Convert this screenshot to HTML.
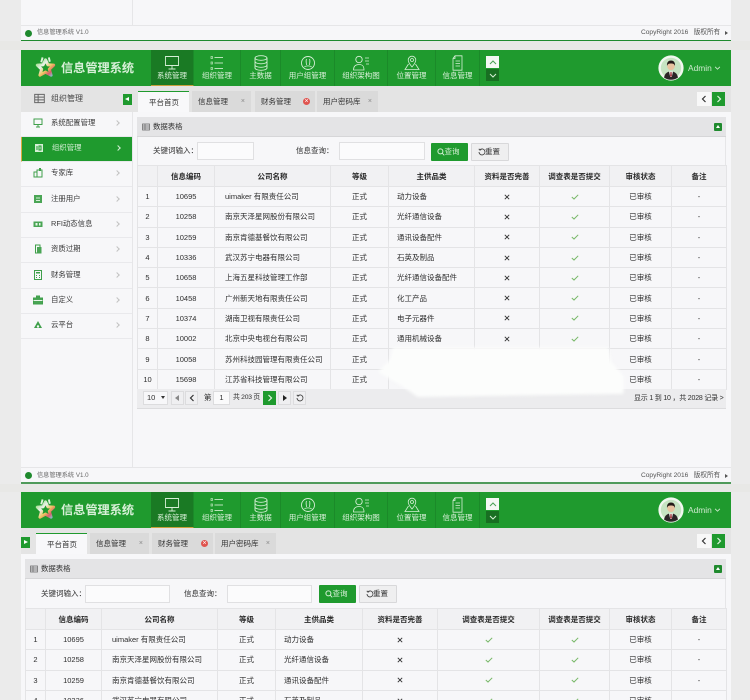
<!DOCTYPE html>
<html lang="zh-CN">
<head>
<meta charset="utf-8">
<title>信息管理系统</title>
<style>
*{box-sizing:border-box;margin:0;padding:0}
html,body{width:750px;height:700px;overflow:hidden}
body{position:relative;background:#ebebeb;font-family:"Liberation Sans","Noto Sans CJK SC",sans-serif;font-size:7.5px;color:#2e2e2e}
#page{position:absolute;left:0;top:0;width:750px;height:700px;filter:blur(.25px);overflow:hidden}
.a{position:absolute}
.c{position:absolute;left:21px;width:710px;background:#f7f7f9}
.t{position:absolute;white-space:nowrap;line-height:10px}
/* header */
.hd{position:absolute;left:21px;width:710px;height:36px;background:#1f9a2e}
.logo{position:absolute;left:13px;top:6px}
.brand{position:absolute;left:40px;top:10px;font-size:12.2px;line-height:16px;font-weight:bold;color:#d8f0d8;white-space:nowrap}
.nav{position:absolute;top:0;height:36px;border-right:1px solid #1b8a29;color:#d9f0d9;text-align:center}
.nav.on{background:#1a7a24;border-bottom:1px solid #c9a03c}
.nav svg{position:absolute;left:50%;top:5px;margin-left:-9px}
.nav span{position:absolute;left:0;right:0;top:21px;line-height:10px;font-size:7.5px;white-space:nowrap}
.up{position:absolute;left:465px;top:6px;width:13px;height:12px;background:#f4f8f4}
.dn{position:absolute;left:465px;top:19px;width:13px;height:12px;background:#186f22}
.adm{position:absolute;left:667px;top:12px;font-size:8.4px;line-height:12px;color:#cfeacf}
/* tabs */
.bar{position:absolute;height:26px;background:#e4e4e4}
.tab{position:absolute;height:21px;background:#dadada;line-height:21px;font-size:7.5px;padding-left:6px;white-space:nowrap;color:#333}
.tab.on{background:#f8f8fa;border-top:1px solid #1f9a2e;padding-left:11px;height:21px}
.tab i{position:absolute;right:6px;top:0;font-style:normal;color:#888;font-size:7px}
.tab b{position:absolute;right:5px;top:7px;width:7px;height:7px;border-radius:50%;background:#e0544f}
.tab b:after{content:"×";position:absolute;left:0;top:0;width:7px;height:7px;line-height:7px;text-align:center;font-size:7px;font-weight:normal;color:#fff}
.ar{position:absolute;width:14px;height:14px;background:#f8f8f8}
.ar.g{background:#1f9a2e;width:13px}
.tg{position:absolute;width:9px;height:11px;background:#1f9a2e}
/* sidebar */
.sb{position:absolute;left:21px;width:111px;height:25.3px;border-bottom:1px solid #e9e9ec;line-height:22px;padding-left:30px;color:#3a3a3a;font-size:7.4px}
.sb.on{background:#1f9a2e;color:#d6efd6;border-left:1px solid #d8a93c}
.sb svg{position:absolute;left:12px;top:6px}
.sb em{position:absolute;left:94px;top:9px;width:4px;height:4px;border-top:1px solid #c2c2c2;border-right:1px solid #c2c2c2;transform:rotate(45deg)}
.sb.on em{border-color:#d6efd6}
/* panel */
.pn{position:absolute;background:#f7f7f9;border-left:1px solid #e6e6e8;border-right:1px solid #e6e6e8;border-bottom:1px solid #dcdcde}
.ph{position:absolute;height:20px;background:#e4e4e6;border-bottom:1px solid #d6d6d8;line-height:20px;font-size:7.4px;color:#333}
.ipt{position:absolute;height:18px;background:#fbfbfc;border:1px solid #e0e0e2}
.bq{position:absolute;height:18px;width:37px;background:#1f9a2e;color:#d8f0d8;line-height:18px;text-align:center;border-radius:1px;padding-left:5px}
.br{position:absolute;height:18px;width:38px;background:#efeff0;border:1px solid #d8d8da;line-height:16px;text-align:center;border-radius:1px;color:#333;padding-left:5px}
table{position:absolute;table-layout:fixed;border-collapse:collapse;background:#f7f7f9}
th,td{border:1px solid #e4e4e6;text-align:center;padding:0;overflow:hidden;white-space:nowrap;height:20.3px;font-size:7.5px;font-weight:normal;color:#2e2e2e}
th{font-weight:bold;background:#f1f1f3;color:#2a2a2a;height:21px}
td.l{text-align:left;padding-left:10px}
td.l2{text-align:left;padding-left:8px}
td svg{display:block;margin:0 auto}
.pg{position:absolute;height:14px;width:13px;background:#efeff1;border:1px solid #dcdcde}
.pgb{position:absolute;background:#ececee;border-bottom:1px solid #dcdcde;height:20px}
.blobw{position:absolute;left:378px;top:346px;width:248px;height:52px;filter:blur(1.6px)}
.blob{width:248px;height:52px;background:#fcfdfc;clip-path:polygon(6% 3%,93% 3%,94% 30%,99% 58%,99% 92%,16% 98%,10% 78%,0 50%,5% 25%)}
</style>
</head>
<body>
<svg width="0" height="0" style="position:absolute">
<defs>
<linearGradient id="lg" x1="0" y1="0" x2="1" y2="1">
<stop offset="0" stop-color="#8fd86f"/><stop offset=".35" stop-color="#e8f2ea"/><stop offset=".6" stop-color="#efc560"/><stop offset=".8" stop-color="#d95f6a"/><stop offset="1" stop-color="#7cc9e0"/>
</linearGradient>
<symbol id="x" viewBox="0 0 6 6"><path d="M.8.8 5.2 5.2M5.2.8.8 5.2" stroke="#333" stroke-width=".9" fill="none"/></symbol>
<symbol id="ck" viewBox="0 0 8 6"><path d="M.8 3 3 5 7.2.8" stroke="#78b868" stroke-width="1" fill="none"/></symbol>
<symbol id="star" viewBox="0 0 24 24">
<path d="M12 4 14.500 9.200 20.500 9.500 16 13.800 17.800 20 12 16.800 6.200 20 8 13.800 3.500 9.500 9.500 9.200Z" fill="#1f9a2e" stroke="url(#lg)" stroke-width="3.200" stroke-linejoin="round"/>
<path d="M9 1.500 7.500 6.500M15.500 1.500 16.500 6" stroke="#dff2dc" stroke-width="2"/>
</symbol>
<symbol id="ava" viewBox="0 0 26 26">
<circle cx="13" cy="13" r="12.600" fill="#f1f8ef"/><circle cx="13" cy="13" r="10.200" fill="#c6e4c2"/>
<path d="M6 22.500c1-4.500 3.500-6 7-6s6 1.500 7 6a12 12 0 0 1-14 0Z" fill="#2b2526"/>
<path d="M11 16.500h4l-1.200 5.500h-1.600Z" fill="#f2f0ec"/><path d="M12.500 17h1l.4 4-.9 1-.9-1Z" fill="#9a2b33"/>
<circle cx="13" cy="11.300" r="3.800" fill="#e8c3a0"/><path d="M9 11c-.4-4 1.800-5.500 4-5.500s4.400 1.500 4 5.500c-.6-2-1.700-2.500-4-2.500S9.600 9 9 11Z" fill="#231a18"/>
</symbol>
<symbol id="n1" viewBox="0 0 18 16"><path d="M2.500 1.500h13v9h-13ZM9 10.500v3M5.500 14h7" stroke="#d6efd6" stroke-width=".9" fill="none"/></symbol>
<symbol id="n2" viewBox="0 0 18 16"><path d="M6.500 2.500H15M6.500 8H15M6.500 13.500H15" stroke="#b9e3b9" stroke-width=".9" fill="none"/><path d="M3 1.500h1.500v2H3ZM3 7h1.500v2H3ZM3 12.500h1.500v2H3Z" stroke="#b9e3b9" stroke-width=".7" fill="none"/></symbol>
<symbol id="n3" viewBox="0 0 18 16"><ellipse cx="9" cy="3" rx="6" ry="2.300" stroke="#d6efd6" stroke-width=".9" fill="none"/><path d="M3 3v10c0 1.300 2.700 2.300 6 2.300s6-1 6-2.300V3M3 6.500c0 1.300 2.700 2.300 6 2.300s6-1 6-2.300M3 10c0 1.300 2.700 2.300 6 2.300s6-1 6-2.300" stroke="#d6efd6" stroke-width=".9" fill="none"/></symbol>
<symbol id="n4" viewBox="0 0 18 16"><circle cx="9" cy="8" r="6.500" stroke="#d6efd6" stroke-width=".9" fill="none"/><path d="M7.500 4c-1 2 0 4 0 6M10.500 4c1 2 0 4 0 6M5.500 12c1-1.500 6-1.500 7 0" stroke="#d6efd6" stroke-width=".8" fill="none"/></symbol>
<symbol id="n5" viewBox="0 0 18 16"><circle cx="7" cy="4.500" r="3.200" stroke="#d6efd6" stroke-width=".9" fill="none"/><path d="M1.500 15c0-4 2-5.500 5.500-5.500s5 1.500 5 5.500ZM13 3h4M13 6h4M14 9h3" stroke="#d6efd6" stroke-width=".8" fill="none"/></symbol>
<symbol id="n6" viewBox="0 0 18 16"><circle cx="9" cy="5" r="1.500" stroke="#d6efd6" stroke-width=".8" fill="none"/><path d="M9 12C6.500 9 5.200 7 5.200 5a3.800 3.800 0 0 1 7.600 0c0 2-1.300 4-3.800 7ZM5.500 9 2 14.500h14L12.500 9" stroke="#d6efd6" stroke-width=".8" fill="none"/></symbol>
<symbol id="n7" viewBox="0 0 18 16"><path d="M6 .8h7v14.400H4V3.500ZM6 .8v2.700H4M6.500 6h4.500M6.500 8.500h4.500M6.500 11h4.500" stroke="#d6efd6" stroke-width=".8" fill="none"/></symbol>
<symbol id="chu" viewBox="0 0 8 5"><path d="M1 4 4 1l3 3" stroke="#48a054" stroke-width="1" fill="none"/></symbol>
<symbol id="chd" viewBox="0 0 8 5"><path d="M1 1l3 3 3-3" stroke="#d6efd6" stroke-width="1" fill="none"/></symbol>
<symbol id="lst" viewBox="0 0 8 8"><path d="M.5 1h7v6h-7ZM.5 3h7M.5 5h7M3 1v6" stroke="#666" stroke-width=".7" fill="none"/></symbol>
<symbol id="sq" viewBox="0 0 8 8"><circle cx="3.400" cy="3.400" r="2.500" stroke="#d8f0d8" fill="none"/><path d="M5.200 5.200 7.300 7.300" stroke="#d8f0d8"/></symbol>
<symbol id="rf" viewBox="0 0 8 8"><path d="M2 1.700A3 3 0 1 1 1 4M.8 .8 2 2.200l1.400-.8" stroke="#444" stroke-width=".9" fill="none"/></symbol>
<symbol id="s1" viewBox="0 0 10 10"><path d="M1 1h8v5.500H1ZM5 6.500V9M3 9h4" stroke="#3f9f4a" fill="none"/></symbol>
<symbol id="s2" viewBox="0 0 10 10"><path d="M1 1h8v8H1Z" fill="#d6efd6"/><path d="M3 3v4M5 3h2v4H5Z" stroke="#1f9a2e" fill="none"/></symbol>
<symbol id="s3" viewBox="0 0 10 10"><path d="M1 4h3v5H1ZM4 2h5v7H4Z" stroke="#3f9f4a" fill="none"/><path d="M6 0v3h2V0Z" fill="#3f9f4a"/></symbol>
<symbol id="s4" viewBox="0 0 10 10"><path d="M1 1h8v8H1Z" fill="#4aa555"/><path d="M3 4h4M3 6.500h4" stroke="#d6efd6"/></symbol>
<symbol id="s5" viewBox="0 0 10 10"><path d="M.5 2.500h9v5.500h-9Z" fill="#4aa555"/><path d="M2.500 4h2v2.500h-2ZM6 4h1.500v2.500H6Z" fill="#eaf6ea"/></symbol>
<symbol id="s6" viewBox="0 0 10 10"><path d="M2.500 1H7v8H2.500Z" stroke="#3f9f4a" fill="none"/><path d="M4 3h4.500v6.500H4Z" fill="#4aa555"/></symbol>
<symbol id="s7" viewBox="0 0 10 10"><path d="M1.500.5h7v9h-7Z" stroke="#3f9f4a" fill="none"/><path d="M3 2h4v1.500H3ZM3 5h1v1H3ZM6 5h1v1H6ZM3 7h1v1H3ZM6 7h1v1H6Z" fill="#3f9f4a"/></symbol>
<symbol id="s8" viewBox="0 0 10 10"><path d="M.5 3h9v6h-9ZM3.500 3V1h3v2" stroke="#3f9f4a" fill="#4aa555"/><path d="M.5 5.500h9" stroke="#eaf6ea"/></symbol>
<symbol id="s9" viewBox="0 0 10 10"><path d="M1 8 5 1l4 7Z" fill="#3f9f4a"/><circle cx="5" cy="6.500" r="1.200" fill="#f7f7f9"/></symbol>
<symbol id="ll" viewBox="0 0 6 8"><path d="M4.500 1 1.500 4l3 3" stroke="#333" stroke-width="1.200" fill="none"/></symbol>
<symbol id="rr" viewBox="0 0 6 8"><path d="M1.500 1l3 3-3 3" stroke="#e4f5e4" stroke-width="1.200" fill="none"/></symbol>
</defs>
</svg>

<div id="page">

<!-- top content fragment -->
<div class="c" style="top:0;height:41px"></div>
<div class="a" style="left:132px;top:0;width:1px;height:26px;background:#e6e6e8"></div>
<div class="a" style="left:21px;top:25px;width:710px;height:1px;background:#e6e6e8"></div>
<div class="a" style="left:25px;top:30px;width:7px;height:7px;border-radius:50%;background:#1f8a2e"></div>
<div class="t" style="left:37px;top:28px;font-size:6.2px;color:#666">信息管理系统 V1.0</div>
<div class="t" style="left:641px;top:28px;font-size:6.6px;color:#555">CopyRight 2016 &nbsp; 版权所有</div>
<div class="a" style="left:725px;top:31px;border-left:3px solid #555;border-top:2px solid transparent;border-bottom:2px solid transparent"></div>
<div class="a" style="left:21px;top:40px;width:710px;height:1px;background:#1f8a2e"></div>
<div class="a" style="left:0;top:41px;width:750px;height:9px;background:#e8e8e6"></div>

<!-- header 1 -->
<div class="hd" style="top:50px">
<svg class="logo" width="23" height="23"><use href="#star"/></svg>
<div class="brand">信息管理系统</div>
<div class="nav on" style="left:130px;width:43px"><svg width="18" height="16"><use href="#n1"/></svg><span>系统管理</span></div>
<div class="nav" style="left:173px;width:47px"><svg width="18" height="16"><use href="#n2"/></svg><span>组织管理</span></div>
<div class="nav" style="left:220px;width:40px"><svg width="18" height="16"><use href="#n3"/></svg><span>主数据</span></div>
<div class="nav" style="left:260px;width:54px"><svg width="18" height="16"><use href="#n4"/></svg><span>用户组管理</span></div>
<div class="nav" style="left:314px;width:53px"><svg width="18" height="16"><use href="#n5"/></svg><span>组织架构图</span></div>
<div class="nav" style="left:367px;width:48px"><svg width="18" height="16"><use href="#n6"/></svg><span>位置管理</span></div>
<div class="nav" style="left:415px;width:44px"><svg width="18" height="16"><use href="#n7"/></svg><span>信息管理</span></div>
<div class="up"><svg width="8" height="5" style="position:absolute;left:2.500px;top:3.500px"><use href="#chu"/></svg></div>
<div class="dn"><svg width="8" height="5" style="position:absolute;left:2.500px;top:3.500px"><use href="#chd"/></svg></div>
<svg class="a" style="left:637px;top:5px" width="26" height="26"><use href="#ava"/></svg>
<div class="adm">Admin</div>
<svg class="a" style="left:693px;top:16px" width="7" height="4"><use href="#chd"/></svg>
</div>

<!-- main 1 -->
<div class="c" style="top:86px;height:381px"></div>
<div class="bar" style="left:21px;top:86px;width:710px"></div>
<div class="a" style="left:132px;top:112px;width:1px;height:355px;background:#e6e6e8"></div>
<svg class="a" style="left:34px;top:93px" width="11" height="11"><use href="#lst"/></svg>
<div class="t" style="left:51px;top:94px;font-size:8px;color:#444">组织管理</div>
<div class="tg" style="left:123px;top:94px"><div class="a" style="left:2px;top:3px;border-right:4px solid #fff;border-top:2.500px solid transparent;border-bottom:2.500px solid transparent"></div></div>

<div class="tab on" style="left:138px;top:91px;width:51px">平台首页</div>
<div class="tab" style="left:192px;top:91px;width:59px">信息管理<i>×</i></div>
<div class="tab" style="left:255px;top:91px;width:60px">财务管理<b></b></div>
<div class="tab" style="left:317px;top:91px;width:61px">用户密码库<i>×</i></div>
<div class="ar" style="left:697px;top:92px"><svg width="6" height="8" style="position:absolute;left:4px;top:3px"><use href="#ll"/></svg></div>
<div class="ar g" style="left:712px;top:92px"><svg width="6" height="8" style="position:absolute;left:4px;top:3px"><use href="#rr"/></svg></div>

<div class="sb" style="top:112px">系统配置管理<svg width="10" height="10"><use href="#s1"/></svg><em></em></div>
<div class="sb on" style="top:137px">组织管理<svg width="10" height="10"><use href="#s2"/></svg><em></em></div>
<div class="sb" style="top:162px">专家库<svg width="10" height="10"><use href="#s3"/></svg><em></em></div>
<div class="sb" style="top:187.500px">注册用户<svg width="10" height="10"><use href="#s4"/></svg><em></em></div>
<div class="sb" style="top:213px">RFI动态信息<svg width="10" height="10"><use href="#s5"/></svg><em></em></div>
<div class="sb" style="top:238px">资质过期<svg width="10" height="10"><use href="#s6"/></svg><em></em></div>
<div class="sb" style="top:263.500px">财务管理<svg width="10" height="10"><use href="#s7"/></svg><em></em></div>
<div class="sb" style="top:289px">自定义<svg width="10" height="10"><use href="#s8"/></svg><em></em></div>
<div class="sb" style="top:314px">云平台<svg width="10" height="10"><use href="#s9"/></svg><em></em></div>

<!-- panel 1 -->
<div class="pn" style="left:137px;top:117px;width:589px;height:292px"></div>
<div class="ph" style="left:137px;top:117px;width:589px;padding-left:16px">数据表格</div>
<svg class="a" style="left:142px;top:123px" width="8" height="8"><use href="#lst"/></svg>
<div class="a" style="left:714px;top:123px;width:8px;height:8px;background:#1f8a2e;border-radius:1px"><div class="a" style="left:2px;top:2px;border-bottom:3px solid #fff;border-left:2px solid transparent;border-right:2px solid transparent"></div></div>
<div class="t" style="left:153px;top:146px">关键词输入：</div>
<div class="ipt" style="left:197px;top:142px;width:57px"></div>
<div class="t" style="left:296px;top:146px">信息查询：</div>
<div class="ipt" style="left:339px;top:142px;width:86px"></div>
<div class="bq" style="left:431px;top:143px">查询</div>
<svg class="a" style="left:437px;top:148px" width="8" height="8"><use href="#sq"/></svg>
<div class="br" style="left:471px;top:143px">重置</div>
<svg class="a" style="left:478px;top:148px" width="8" height="8"><use href="#rf"/></svg>

<table style="left:137px;top:165px;width:589px">
<colgroup><col style="width:20px"><col style="width:57px"><col style="width:116px"><col style="width:58px"><col style="width:86px"><col style="width:65px"><col style="width:70px"><col style="width:62px"><col style="width:55px"></colgroup>
<tr><th></th><th>信息编码</th><th>公司名称</th><th>等级</th><th>主供品类</th><th>资料是否完善</th><th>调查表是否提交</th><th>审核状态</th><th>备注</th></tr>
<tr><td>1</td><td>10695</td><td class="l">uimaker 有限责任公司</td><td>正式</td><td class="l2">动力设备</td><td><svg width="6" height="6"><use href="#x"/></svg></td><td><svg width="8" height="6"><use href="#ck"/></svg></td><td>已审核</td><td>-</td></tr>
<tr><td>2</td><td>10258</td><td class="l">南京天泽星网股份有限公司</td><td>正式</td><td class="l2">光纤通信设备</td><td><svg width="6" height="6"><use href="#x"/></svg></td><td><svg width="8" height="6"><use href="#ck"/></svg></td><td>已审核</td><td>-</td></tr>
<tr><td>3</td><td>10259</td><td class="l">南京肯德基餐饮有限公司</td><td>正式</td><td class="l2">通讯设备配件</td><td><svg width="6" height="6"><use href="#x"/></svg></td><td><svg width="8" height="6"><use href="#ck"/></svg></td><td>已审核</td><td>-</td></tr>
<tr><td>4</td><td>10336</td><td class="l">武汉苏宁电器有限公司</td><td>正式</td><td class="l2">石英及制品</td><td><svg width="6" height="6"><use href="#x"/></svg></td><td><svg width="8" height="6"><use href="#ck"/></svg></td><td>已审核</td><td>-</td></tr>
<tr><td>5</td><td>10658</td><td class="l">上海五星科技管理工作部</td><td>正式</td><td class="l2">光纤通信设备配件</td><td><svg width="6" height="6"><use href="#x"/></svg></td><td><svg width="8" height="6"><use href="#ck"/></svg></td><td>已审核</td><td>-</td></tr>
<tr><td>6</td><td>10458</td><td class="l">广州新天地有限责任公司</td><td>正式</td><td class="l2">化工产品</td><td><svg width="6" height="6"><use href="#x"/></svg></td><td><svg width="8" height="6"><use href="#ck"/></svg></td><td>已审核</td><td>-</td></tr>
<tr><td>7</td><td>10374</td><td class="l">湖南卫视有限责任公司</td><td>正式</td><td class="l2">电子元器件</td><td><svg width="6" height="6"><use href="#x"/></svg></td><td><svg width="8" height="6"><use href="#ck"/></svg></td><td>已审核</td><td>-</td></tr>
<tr><td>8</td><td>10002</td><td class="l">北京中央电视台有限公司</td><td>正式</td><td class="l2">通用机械设备</td><td><svg width="6" height="6"><use href="#x"/></svg></td><td><svg width="8" height="6"><use href="#ck"/></svg></td><td>已审核</td><td>-</td></tr>
<tr><td>9</td><td>10058</td><td class="l">苏州科技园管理有限责任公司</td><td>正式</td><td></td><td></td><td></td><td>已审核</td><td>-</td></tr>
<tr><td>10</td><td>15698</td><td class="l">江苏省科技管理有限公司</td><td>正式</td><td></td><td></td><td></td><td>已审核</td><td>-</td></tr>
</table>

<div class="pgb" style="left:137px;top:389px;width:589px"></div>
<div class="pg" style="left:143px;top:391px;width:25px;background:#f7f7f9;line-height:12px;padding-left:3px">10</div>
<div class="a" style="left:161px;top:396px;border-top:3px solid #333;border-left:2px solid transparent;border-right:2px solid transparent"></div>
<div class="pg" style="left:171px;top:391px"><div class="a" style="left:3px;top:3px;border-right:4px solid #888;border-top:3px solid transparent;border-bottom:3px solid transparent"></div></div>
<div class="pg" style="left:185px;top:391px"><svg width="6" height="8" class="a" style="left:3px;top:2px"><use href="#ll"/></svg></div>
<div class="t" style="left:204px;top:393px">第</div>
<div class="pg" style="left:213px;top:391px;width:17px;background:#fafafb;text-align:center;line-height:12px">1</div>
<div class="t" style="left:233px;top:393px;font-size:6.8px;letter-spacing:-.25px">共 203 页</div>
<div class="pg" style="left:263px;top:391px;background:#1f9a2e;border-color:#1f9a2e"><svg width="6" height="8" class="a" style="left:3px;top:2px"><use href="#rr"/></svg></div>
<div class="pg" style="left:278px;top:391px"><div class="a" style="left:4px;top:3px;border-left:4px solid #222;border-top:3px solid transparent;border-bottom:3px solid transparent"></div></div>
<div class="pg" style="left:293px;top:391px"><svg class="a" style="left:2px;top:2px" width="8" height="8"><use href="#rf"/></svg></div>
<div class="t" style="left:634px;top:394px;font-size:7px;letter-spacing:-.2px">显示 1 到 10 ，共 2028 记录 &gt;</div>

<div class="blobw"><div class="blob"></div></div>

<!-- footer 2 -->
<div class="a" style="left:21px;top:467px;width:710px;height:16px;background:#f7f7f9;border-top:1px solid #e6e6e8"></div>
<div class="a" style="left:25px;top:472px;width:7px;height:7px;border-radius:50%;background:#1f8a2e"></div>
<div class="t" style="left:37px;top:471px;font-size:6.2px;color:#666">信息管理系统 V1.0</div>
<div class="t" style="left:641px;top:471px;font-size:6.6px;color:#555">CopyRight 2016 &nbsp; 版权所有</div>
<div class="a" style="left:725px;top:474px;border-left:3px solid #555;border-top:2px solid transparent;border-bottom:2px solid transparent"></div>
<div class="a" style="left:21px;top:482px;width:710px;height:2px;background:#4f9a5a"></div>
<div class="a" style="left:0;top:484px;width:750px;height:8px;background:#e8e8e6"></div>

<!-- header 2 -->
<div class="hd" style="top:492px">
<svg class="logo" width="23" height="23"><use href="#star"/></svg>
<div class="brand">信息管理系统</div>
<div class="nav on" style="left:130px;width:43px"><svg width="18" height="16"><use href="#n1"/></svg><span>系统管理</span></div>
<div class="nav" style="left:173px;width:47px"><svg width="18" height="16"><use href="#n2"/></svg><span>组织管理</span></div>
<div class="nav" style="left:220px;width:40px"><svg width="18" height="16"><use href="#n3"/></svg><span>主数据</span></div>
<div class="nav" style="left:260px;width:54px"><svg width="18" height="16"><use href="#n4"/></svg><span>用户组管理</span></div>
<div class="nav" style="left:314px;width:53px"><svg width="18" height="16"><use href="#n5"/></svg><span>组织架构图</span></div>
<div class="nav" style="left:367px;width:48px"><svg width="18" height="16"><use href="#n6"/></svg><span>位置管理</span></div>
<div class="nav" style="left:415px;width:44px"><svg width="18" height="16"><use href="#n7"/></svg><span>信息管理</span></div>
<div class="up"><svg width="8" height="5" style="position:absolute;left:2.500px;top:3.500px"><use href="#chu"/></svg></div>
<div class="dn"><svg width="8" height="5" style="position:absolute;left:2.500px;top:3.500px"><use href="#chd"/></svg></div>
<svg class="a" style="left:637px;top:5px" width="26" height="26"><use href="#ava"/></svg>
<div class="adm">Admin</div>
<svg class="a" style="left:693px;top:16px" width="7" height="4"><use href="#chd"/></svg>
</div>

<!-- main 2 -->
<div class="c" style="top:528px;height:172px"></div>
<div class="bar" style="left:21px;top:528px;width:710px"></div>
<div class="tg" style="left:21px;top:537px"><div class="a" style="left:3px;top:3px;border-left:4px solid #fff;border-top:2.500px solid transparent;border-bottom:2.500px solid transparent"></div></div>
<div class="tab on" style="left:36px;top:533px;width:51px">平台首页</div>
<div class="tab" style="left:90px;top:533px;width:59px">信息管理<i>×</i></div>
<div class="tab" style="left:152px;top:533px;width:61px">财务管理<b></b></div>
<div class="tab" style="left:215px;top:533px;width:61px">用户密码库<i>×</i></div>
<div class="ar" style="left:697px;top:534px"><svg width="6" height="8" style="position:absolute;left:4px;top:3px"><use href="#ll"/></svg></div>
<div class="ar g" style="left:712px;top:534px"><svg width="6" height="8" style="position:absolute;left:4px;top:3px"><use href="#rr"/></svg></div>

<div class="pn" style="left:25px;top:559px;width:701px;height:141px"></div>
<div class="ph" style="left:25px;top:559px;width:701px;padding-left:16px">数据表格</div>
<svg class="a" style="left:30px;top:565px" width="8" height="8"><use href="#lst"/></svg>
<div class="a" style="left:714px;top:565px;width:8px;height:8px;background:#1f8a2e;border-radius:1px"><div class="a" style="left:2px;top:2px;border-bottom:3px solid #fff;border-left:2px solid transparent;border-right:2px solid transparent"></div></div>
<div class="t" style="left:41px;top:589px">关键词输入：</div>
<div class="ipt" style="left:85px;top:585px;width:85px"></div>
<div class="t" style="left:184px;top:589px">信息查询：</div>
<div class="ipt" style="left:227px;top:585px;width:85px"></div>
<div class="bq" style="left:319px;top:585px">查询</div>
<svg class="a" style="left:325px;top:590px" width="8" height="8"><use href="#sq"/></svg>
<div class="br" style="left:359px;top:585px">重置</div>
<svg class="a" style="left:366px;top:590px" width="8" height="8"><use href="#rf"/></svg>

<table style="left:25px;top:608px;width:701px">
<colgroup><col style="width:20px"><col style="width:56px"><col style="width:116px"><col style="width:58px"><col style="width:87px"><col style="width:75px"><col style="width:102px"><col style="width:70px"><col style="width:62px"><col style="width:55px"></colgroup>
<tr><th></th><th>信息编码</th><th>公司名称</th><th>等级</th><th>主供品类</th><th>资料是否完善</th><th>调查表是否提交</th><th>调查表是否提交</th><th>审核状态</th><th>备注</th></tr>
<tr><td>1</td><td>10695</td><td class="l">uimaker 有限责任公司</td><td>正式</td><td class="l2">动力设备</td><td><svg width="6" height="6"><use href="#x"/></svg></td><td><svg width="8" height="6"><use href="#ck"/></svg></td><td><svg width="8" height="6"><use href="#ck"/></svg></td><td>已审核</td><td>-</td></tr>
<tr><td>2</td><td>10258</td><td class="l">南京天泽星网股份有限公司</td><td>正式</td><td class="l2">光纤通信设备</td><td><svg width="6" height="6"><use href="#x"/></svg></td><td><svg width="8" height="6"><use href="#ck"/></svg></td><td><svg width="8" height="6"><use href="#ck"/></svg></td><td>已审核</td><td>-</td></tr>
<tr><td>3</td><td>10259</td><td class="l">南京肯德基餐饮有限公司</td><td>正式</td><td class="l2">通讯设备配件</td><td><svg width="6" height="6"><use href="#x"/></svg></td><td><svg width="8" height="6"><use href="#ck"/></svg></td><td><svg width="8" height="6"><use href="#ck"/></svg></td><td>已审核</td><td>-</td></tr>
<tr><td>4</td><td>10336</td><td class="l">武汉苏宁电器有限公司</td><td>正式</td><td class="l2">石英及制品</td><td><svg width="6" height="6"><use href="#x"/></svg></td><td><svg width="8" height="6"><use href="#ck"/></svg></td><td><svg width="8" height="6"><use href="#ck"/></svg></td><td>已审核</td><td>-</td></tr>
</table>

</div>
</body>
</html>
